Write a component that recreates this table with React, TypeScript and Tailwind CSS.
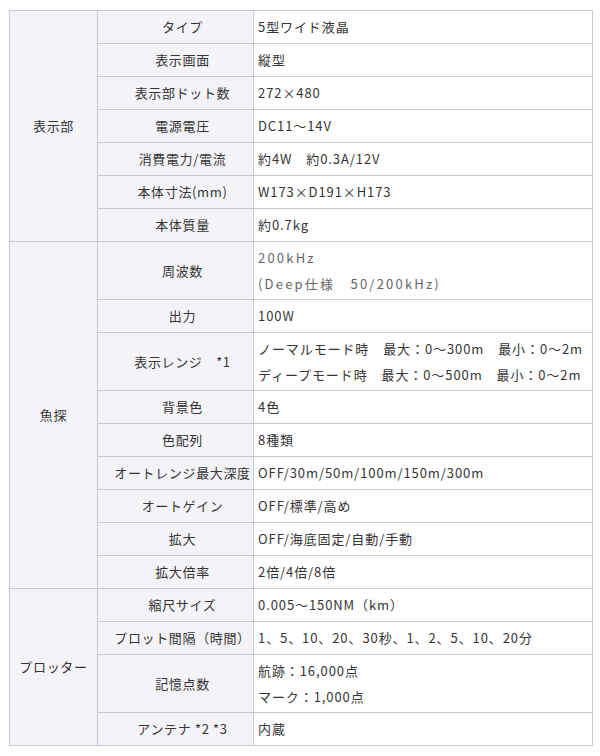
type Row = { label: string; value: string[]; tall?: boolean; wide?: boolean };
type Section = { title: string; rows: Row[] };

const sections: Section[] = [
  {
    title: '表示部',
    rows: [
      { label: 'タイプ', value: ['5型ワイド液晶'] },
      { label: '表示画面', value: ['縦型'] },
      { label: '表示部ドット数', value: ['272×480'] },
      { label: '電源電圧', value: ['DC11〜14V'] },
      { label: '消費電力/電流', value: ['約4W　約0.3A/12V'] },
      { label: '本体寸法(mm)', value: ['W173×D191×H173'] },
      { label: '本体質量', value: ['約0.7kg'] },
    ],
  },
  {
    title: '魚探',
    rows: [
      { label: '周波数', value: ['200kHz', '(Deep仕様　50/200kHz)'], tall: true, wide: true },
      { label: '出力', value: ['100W'] },
      {
        label: '表示レンジ　*1',
        value: ['ノーマルモード時　最大：0〜300m　最小：0〜2m', 'ディープモード時　最大：0〜500m　最小：0〜2m'],
        tall: true,
      },
      { label: '背景色', value: ['4色'] },
      { label: '色配列', value: ['8種類'] },
      { label: 'オートレンジ最大深度', value: ['OFF/30m/50m/100m/150m/300m'] },
      { label: 'オートゲイン', value: ['OFF/標準/高め'] },
      { label: '拡大', value: ['OFF/海底固定/自動/手動'] },
      { label: '拡大倍率', value: ['2倍/4倍/8倍'] },
    ],
  },
  {
    title: 'プロッター',
    rows: [
      { label: '縮尺サイズ', value: ['0.005〜150NM（km）'] },
      { label: 'プロット間隔（時間）', value: ['1、5、10、20、30秒、1、2、5、10、20分'] },
      { label: '記憶点数', value: ['航跡：16,000点', 'マーク：1,000点'], tall: true },
      { label: 'アンテナ *2 *3', value: ['内蔵'] },
    ],
  },
];

export default function App() {
  return (
    <div className="min-h-[756px] bg-white pl-[9px] pt-[10px] font-['Noto_Sans_CJK_JP','Noto_Sans',sans-serif] text-[13px] text-[#353535]">
      <table className="w-[584px] table-fixed border-collapse border border-[#c2cad6]">
        <colgroup>
          <col className="w-[88px]" />
          <col className="w-[156px]" />
          <col />
        </colgroup>
        <tbody>
          {sections.map((section) =>
            section.rows.map((row, i) => (
              <tr key={section.title + row.label} className={row.tall ? 'h-[58px]' : 'h-[33px]'}>
                {i === 0 && (
                  <td
                    rowSpan={section.rows.length}
                    className="border border-[#c2cad6] bg-[#f4f3f8] text-center align-middle tracking-[0.05em]"
                  >
                    {section.title}
                  </td>
                )}
                <td className="overflow-hidden whitespace-nowrap border border-[#c2cad6] bg-[#f4f3f8] pl-4 pr-[2px] text-center align-middle tracking-[0.05em]">
                  {row.label}
                </td>
                <td
                  className={
                    row.wide
                      ? 'border border-[#c2cad6] bg-white px-1 align-middle leading-[26px] tracking-[0.17em] text-[#666]'
                      : 'border border-[#c2cad6] bg-white px-1 align-middle leading-[26px] tracking-[0.07em]'
                  }
                >
                  {row.value.map((line) => (
                    <div key={line} className="whitespace-nowrap">
                      {line}
                    </div>
                  ))}
                </td>
              </tr>
            ))
          )}
        </tbody>
      </table>
    </div>
  );
}
